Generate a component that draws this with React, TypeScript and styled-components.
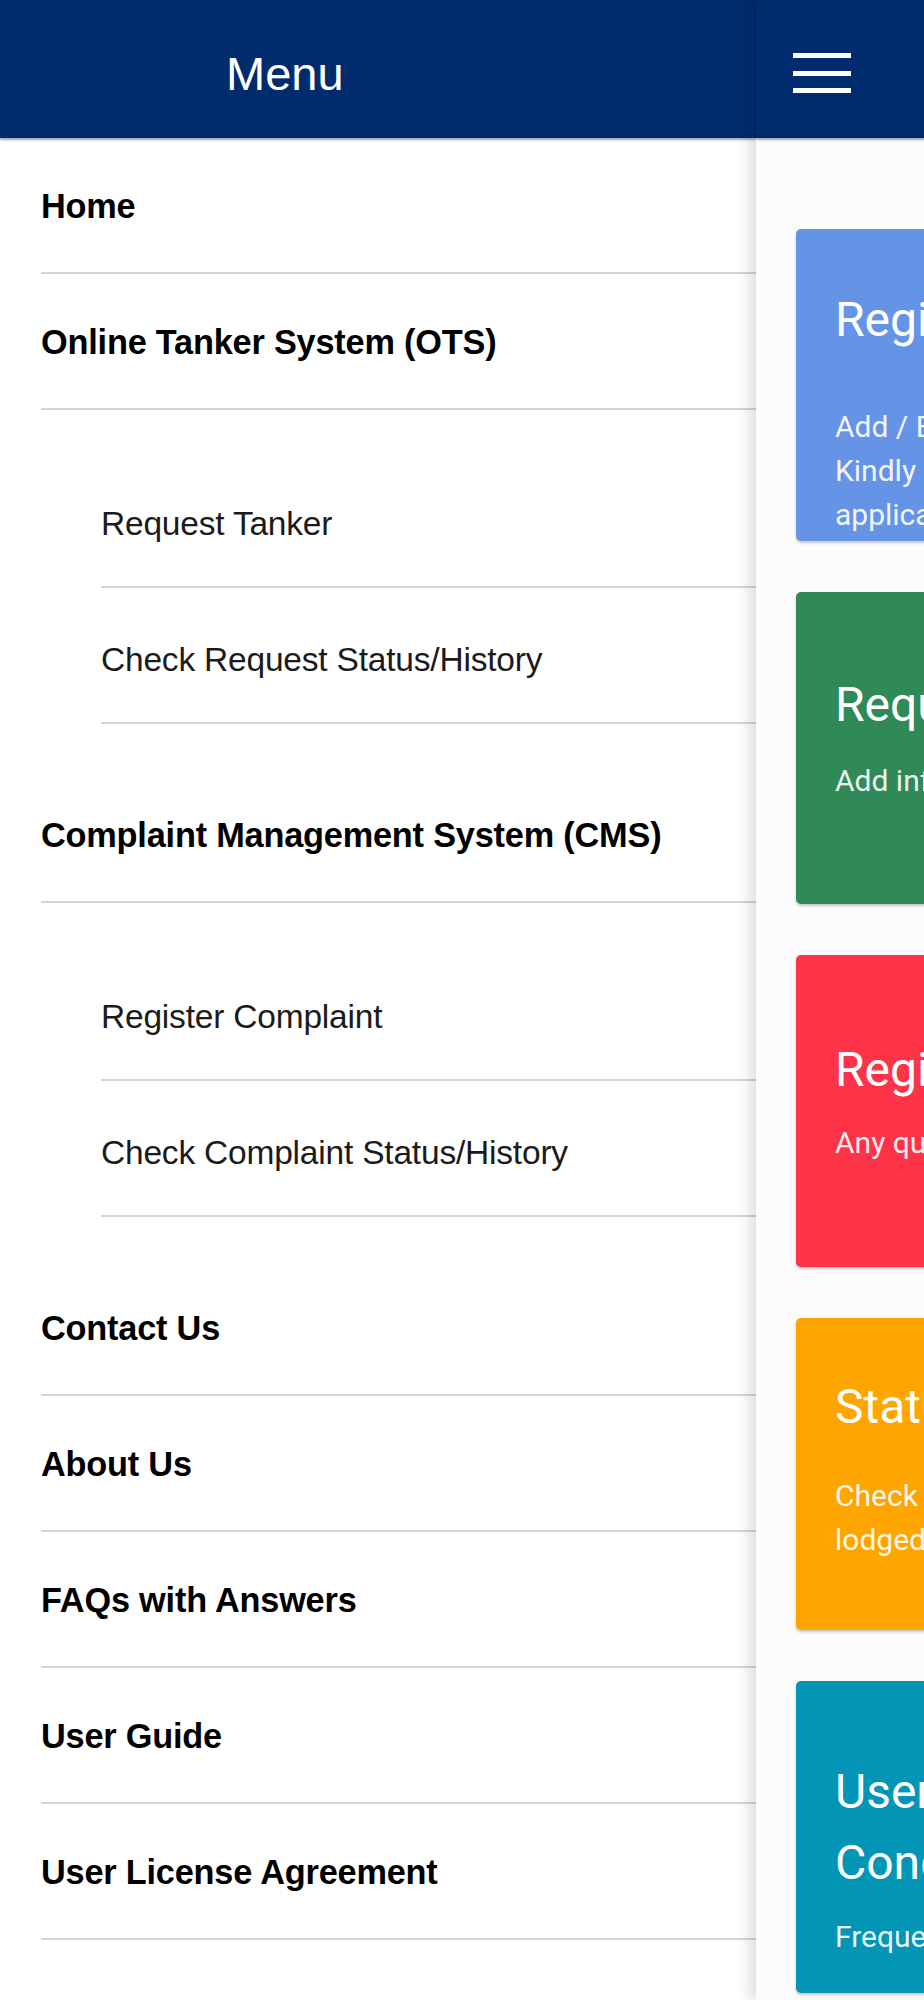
import React from 'react'
import styled, { createGlobalStyle } from 'styled-components'

const GlobalStyle = createGlobalStyle`
  html, body {
    margin: 0;
    padding: 0;
    background: #ffffff;
    overflow: hidden;
  }
  * {
    box-sizing: border-box;
  }
`

const NAVY = '#002c6e'

const Screen = styled.div`
  display: flex;
  width: 924px;
  height: 2000px;
  overflow: hidden;
  font-family: 'Liberation Sans', Arial, sans-serif;
`

const Drawer = styled.aside`
  flex: 0 0 756px;
  display: flex;
  flex-direction: column;
  background: #ffffff;
`

const DrawerHeader = styled.header`
  height: 138px;
  flex-shrink: 0;
  display: flex;
  align-items: center;
  padding: 8px 0 0 226px;
  background: ${NAVY};
  box-shadow: 0 2px 2px rgba(0, 0, 0, 0.35);
`

const DrawerTitle = styled.h1`
  margin: 0;
  color: #ffffff;
  font-weight: 400;
  font-size: 47px;
  line-height: 1;
`

const MenuList = styled.nav`
  display: flex;
  flex-direction: column;
`

const MenuRow = styled.div<{ $sub?: boolean }>`
  height: 136px;
  display: flex;
  align-items: center;
  padding-top: ${(p) => (p.$sub ? '9px' : '3px')};
  margin-left: ${(p) => (p.$sub ? '101px' : '41px')};
  border-bottom: 2px solid #d4d4d6;
  color: ${(p) => (p.$sub ? '#1b1b1b' : '#000000')};
  font-weight: ${(p) => (p.$sub ? 400 : 700)};
  font-size: ${(p) => (p.$sub ? '33.5px' : '34.3px')};
  letter-spacing: -0.2px;
`

const SubGroup = styled.div`
  display: flex;
  flex-direction: column;
  padding: 42px 0 43px;
`

const Main = styled.main`
  flex: 0 0 924px;
  position: relative;
  z-index: 2;
  display: flex;
  flex-direction: column;
  background: #fcfcfc;
  box-shadow: -6px 0 14px rgba(0, 0, 0, 0.14);
`

const TopBar = styled.header`
  height: 138px;
  flex-shrink: 0;
  display: flex;
  align-items: center;
  padding: 8px 0 0 37px;
  background: ${NAVY};
  box-shadow: 0 2px 2px rgba(0, 0, 0, 0.35);
`

const Burger = styled.button`
  width: 58px;
  height: 40px;
  padding: 0;
  border: none;
  background: none;
  display: flex;
  flex-direction: column;
  justify-content: space-between;
  span {
    display: block;
    height: 5px;
    background: #ffffff;
  }
`

const CardList = styled.div`
  display: flex;
  flex-direction: column;
  gap: 51px;
  padding: 91px 40px 0;
`

const Card = styled.section<{ $bg: string; $pad: number }>`
  height: 312px;
  flex-shrink: 0;
  padding: ${(p) => p.$pad}px 39px 0;
  border-radius: 5px;
  background: ${(p) => p.$bg};
  box-shadow: 0 2px 3px rgba(0, 0, 0, 0.22);
  color: #ffffff;
  font-family: Roboto, 'Liberation Sans', sans-serif;
  overflow: hidden;
  white-space: nowrap;
`

const CardTitle = styled.h2<{ $gap: number }>`
  margin: 0 0 ${(p) => p.$gap}px;
  font-weight: 400;
  font-size: 48px;
  line-height: 71px;
`

const CardText = styled.p`
  margin: 0;
  font-size: 30px;
  line-height: 44px;
  color: rgba(255, 255, 255, 0.93);
`

type CardData = {
  color: string
  pad: number
  gap: number
  title: string[]
  text: string[]
}

const cards: CardData[] = [
  {
    color: '#6594e7',
    pad: 55,
    gap: 50,
    title: ['Registration'],
    text: [
      'Add / Edit consumer numbers linked with your account.',
      'Kindly register your water connection to use this',
      'application services.',
    ],
  },
  {
    color: '#2f8a58',
    pad: 77,
    gap: 19,
    title: ['Request Tanker'],
    text: ['Add information to request a water tanker.'],
  },
  {
    color: '#fe3347',
    pad: 79,
    gap: 16,
    title: ['Register Complaint'],
    text: ['Any query or complaint regarding water supply.'],
  },
  {
    color: '#fea500',
    pad: 53,
    gap: 32,
    title: ['Status / History'],
    text: ['Check status and history of your requests and', 'lodged complaints.'],
  },
  {
    color: '#0395b6',
    pad: 75,
    gap: 17,
    title: ['User Guide and', 'Concerns'],
    text: ['Frequently asked questions with answers.'],
  },
]

const App: React.FC = () => {
  return (
    <>
      <GlobalStyle />
      <Screen>
        <Drawer>
          <DrawerHeader>
            <DrawerTitle>Menu</DrawerTitle>
          </DrawerHeader>
          <MenuList>
            <MenuRow>Home</MenuRow>
            <MenuRow>Online Tanker System (OTS)</MenuRow>
            <SubGroup>
              <MenuRow $sub>Request Tanker</MenuRow>
              <MenuRow $sub>Check Request Status/History</MenuRow>
            </SubGroup>
            <MenuRow>Complaint Management System (CMS)</MenuRow>
            <SubGroup>
              <MenuRow $sub>Register Complaint</MenuRow>
              <MenuRow $sub>Check Complaint Status/History</MenuRow>
            </SubGroup>
            <MenuRow>Contact Us</MenuRow>
            <MenuRow>About Us</MenuRow>
            <MenuRow>FAQs with Answers</MenuRow>
            <MenuRow>User Guide</MenuRow>
            <MenuRow>User License Agreement</MenuRow>
          </MenuList>
        </Drawer>
        <Main>
          <TopBar>
            <Burger aria-label="menu">
              <span />
              <span />
              <span />
            </Burger>
          </TopBar>
          <CardList>
            {cards.map((c) => (
              <Card key={c.title[0]} $bg={c.color} $pad={c.pad}>
                <CardTitle $gap={c.gap}>
                  {c.title.map((t, i) => (
                    <React.Fragment key={t}>
                      {i > 0 && <br />}
                      {t}
                    </React.Fragment>
                  ))}
                </CardTitle>
                {c.text.map((t) => (
                  <CardText key={t}>{t}</CardText>
                ))}
              </Card>
            ))}
          </CardList>
        </Main>
      </Screen>
    </>
  )
}

export default App
